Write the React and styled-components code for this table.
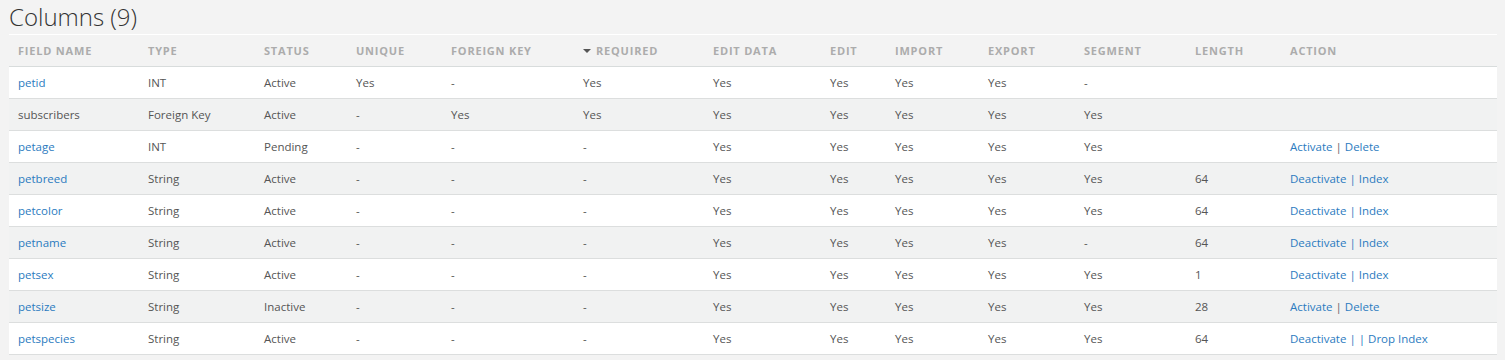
import React from "react";
import styled, { createGlobalStyle } from "styled-components";

const Global = createGlobalStyle`
  html, body { margin: 0; padding: 0; background: #f3f3f3; }
  body { font-family: "Open Sans", "Noto Sans", sans-serif; }
`;

const Page = styled.div`
  padding: 0 8px 0 9px;
`;

const Title = styled.h2`
  margin: 0;
  height: 34px;
  font-family: "Open Sans", sans-serif;
  font-weight: 300;
  font-size: 24px;
  line-height: 34px;
  color: #333;
  border-bottom: 1px solid #ffffff;
  padding-left: 0;
`;

const Table = styled.table`
  width: 100%;
  border-collapse: collapse;
  table-layout: fixed;
`;

const Th = styled.th`
  height: 30px;
  padding: 0 0 1px 9px;
  text-align: left;
  font-family: "Open Sans", sans-serif;
  font-weight: 700;
  font-size: 11px;
  letter-spacing: 0.8px;
  color: #acacac;
  text-transform: uppercase;
  border-bottom: 1px solid #d8dcdc;
  white-space: nowrap;
`;

const Caret = styled.span`
  display: inline-block;
  width: 0;
  height: 0;
  border-left: 4px solid transparent;
  border-right: 4px solid transparent;
  border-top: 4px solid #555;
  margin-right: 5px;
  vertical-align: 2px;
`;

const Row = styled.tr`
  background: ${(p) => (p.$striped ? "#f1f2f2" : "#ffffff")};
`;

const Td = styled.td`
  height: 31px;
  padding: 0 0 0 9px;
  font-size: 11.5px;
  color: #555;
  border-bottom: 1px solid #dcdede;
  white-space: nowrap;
`;

const Link = styled.a`
  color: #2b7bc0;
  text-decoration: none;
  cursor: pointer;
`;

const Sep = styled.span`
  color: ${(p) => (p.$muted ? "#666" : "#2b7bc0")};
`;

const widths = [130, 116, 92, 95, 132, 130, 117, 65, 93, 96, 111, 95, null];
const headers = [
  "Field Name", "Type", "Status", "Unique", "Foreign Key", "Required",
  "Edit Data", "Edit", "Import", "Export", "Segment", "Length", "Action",
];

const rows = [
  { name: "petid", link: true, type: "INT", status: "Active", unique: "Yes", fk: "-", req: "Yes", seg: "-", len: "", action: null },
  { name: "subscribers", link: false, type: "Foreign Key", status: "Active", unique: "-", fk: "Yes", req: "Yes", seg: "Yes", len: "", action: null },
  { name: "petage", link: true, type: "INT", status: "Pending", unique: "-", fk: "-", req: "-", seg: "Yes", len: "", action: "activate" },
  { name: "petbreed", link: true, type: "String", status: "Active", unique: "-", fk: "-", req: "-", seg: "Yes", len: "64", action: "deactivate" },
  { name: "petcolor", link: true, type: "String", status: "Active", unique: "-", fk: "-", req: "-", seg: "Yes", len: "64", action: "deactivate" },
  { name: "petname", link: true, type: "String", status: "Active", unique: "-", fk: "-", req: "-", seg: "-", len: "64", action: "deactivate" },
  { name: "petsex", link: true, type: "String", status: "Active", unique: "-", fk: "-", req: "-", seg: "Yes", len: "1", action: "deactivate" },
  { name: "petsize", link: true, type: "String", status: "Inactive", unique: "-", fk: "-", req: "-", seg: "Yes", len: "28", action: "activate" },
  { name: "petspecies", link: true, type: "String", status: "Active", unique: "-", fk: "-", req: "-", seg: "Yes", len: "64", action: "drop" },
];

function Action({ kind }) {
  if (kind === "activate")
    return (
      <>
        <Link>Activate</Link> <Sep $muted>|</Sep> <Link>Delete</Link>
      </>
    );
  if (kind === "deactivate")
    return (
      <>
        <Link>Deactivate</Link> <Sep>|</Sep> <Link>Index</Link>
      </>
    );
  if (kind === "drop")
    return (
      <>
        <Link>Deactivate</Link> <Sep>|</Sep> <Sep>|</Sep> <Link>Drop Index</Link>
      </>
    );
  return null;
}

export default function App() {
  return (
    <Page>
      <Global />
      <Title>Columns (9)</Title>
      <Table>
        <colgroup>
          {widths.map((w, i) => (
            <col key={i} style={w ? { width: w } : undefined} />
          ))}
        </colgroup>
        <thead>
          <tr>
            {headers.map((h) => (
              <Th key={h}>
                {h === "Required" && <Caret />}
                {h}
              </Th>
            ))}
          </tr>
        </thead>
        <tbody>
          {rows.map((r, i) => (
            <Row key={r.name} $striped={i % 2 === 1}>
              <Td>{r.link ? <Link>{r.name}</Link> : r.name}</Td>
              <Td>{r.type}</Td>
              <Td>{r.status}</Td>
              <Td>{r.unique}</Td>
              <Td>{r.fk}</Td>
              <Td>{r.req}</Td>
              <Td>Yes</Td>
              <Td>Yes</Td>
              <Td>Yes</Td>
              <Td>Yes</Td>
              <Td>{r.seg}</Td>
              <Td>{r.len}</Td>
              <Td>{r.action && <Action kind={r.action} />}</Td>
            </Row>
          ))}
        </tbody>
      </Table>
    </Page>
  );
}
